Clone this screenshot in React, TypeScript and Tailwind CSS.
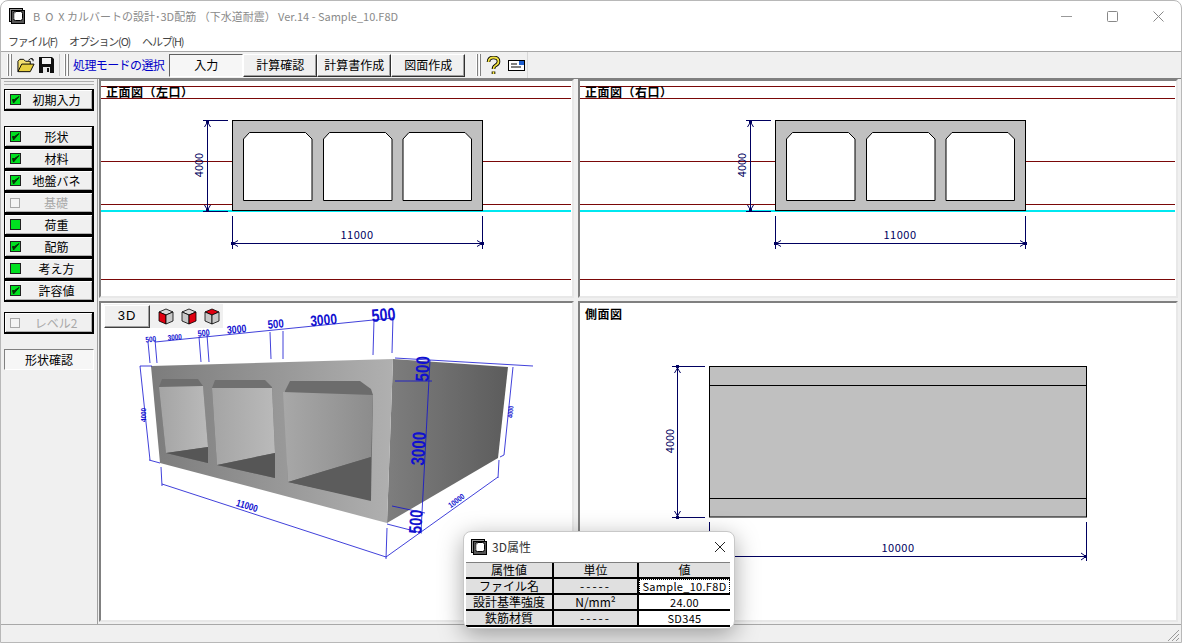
import * as React from "react";

const NAVY = "#000060";
const MAROON = "#7a0808";
const BLUE = "#1010d0";

// window icon, nested squares
const AppIcon = () => (
  <svg width="16" height="16" viewBox="0 0 16 16" className="block shrink-0">
    <rect x="0.5" y="0.5" width="13" height="13" fill="#9a9a9a" stroke="#000" />
    <rect x="2.5" y="2.5" width="13" height="13" fill="#555" stroke="#000" />
    <rect x="4.5" y="3.5" width="9" height="9" rx="2" fill="#fff" stroke="#000" />
    <path d="M5 11 L5 6 Q5 4.500 7 4.500" stroke="#888" fill="none" />
  </svg>
);

const Grip = () => (
  <div className="flex gap-px h-[22px] shrink-0">
    <div className="w-[2px] border-l border-r border-l-white border-r-[#808080]" />
    <div className="w-[2px] border-l border-r border-l-white border-r-[#808080]" />
  </div>
);

const ToolButton = ({ label, pressed }: { label: string; pressed?: boolean }) => (
  <div
    className={
      pressed
        ? "w-[74px] h-[23px] flex items-center justify-center text-xs text-black bg-[#f6f6f6] border border-t-[#606060] border-l-[#606060] border-r-white border-b-white"
        : "w-[74px] h-[23px] flex items-center justify-center text-xs text-black bg-[#f0f0f0] border border-t-white border-l-white border-r-[#303030] border-b-[#303030] shadow-[inset_-1px_-1px_0_#a0a0a0]"
    }
  >
    {label}
  </div>
);

type Side = { label: string; state: "on" | "green" | "off" };

const Check = ({ state }: { state: Side["state"] }) => {
  if (state === "off") {
    return <div className="w-[10px] h-[10px] border border-[#a8a8a8] bg-[#f4f4f4] shrink-0" />;
  }
  return (
    <svg width="11" height="11" viewBox="0 0 11 11" className="block shrink-0">
      <rect x="0.500" y="0.500" width="10" height="10" fill="#00e020" stroke="#202020" />
      {state === "on" && <path d="M2.500 5.500 L3.500 9 L9 2.500 L4.500 5.500 Z" stroke="#083008" fill="#083008" />}
    </svg>
  );
};

const SideButton = ({ label, state }: Side) => (
  <div className="relative flex items-center w-[90px] h-[22px] pl-[5px] bg-[#f0f0f0] border border-black border-r-2 border-b-2 shadow-[inset_1px_1px_0_#fff,inset_-1px_-1px_0_#b0b0b0]">
    <Check state={state} />
    <span className={state === "off" ? "flex-1 text-center text-xs text-[#a8a8a8]" : "flex-1 text-center text-xs text-black"}>
      {label}
    </span>
  </div>
);

const Panel = ({ title, children }: { title?: string; children: React.ReactNode }) => (
  <div className="relative overflow-hidden bg-white border-2 border-t-[#808080] border-l-[#808080] border-r-[#e8e8e8] border-b-[#e8e8e8]">
    {children}
    {title && <span className="absolute left-[5px] top-[3px] text-xs font-bold text-black tracking-[0.5px]">{title}</span>}
  </div>
);

const Opening = ({ x }: { x: number }) => (
  <path
    d={`M${x} 200.500 V139 L${x + 6} 132.500 H${x + 62} L${x + 68.500} 139 V200.500 Z`}
    fill="#fff"
    stroke="#000"
  />
);

// front view: ground lines, box section and dimensions
const FrontView = ({ w, origin, boxX }: { w: number; origin: number; boxX: number }) => {
  const sx = boxX - 232;
  return (
    <svg width={w} height={215} viewBox={`${origin} 81 ${w} 215`} className="block">
      {[86.500, 98.500, 161.500, 204.500, 279.500].map((y) => (
        <line key={y} x1={origin} x2={origin + w - 1} y1={y} y2={y} stroke={MAROON} />
      ))}
      <line x1={origin} x2={origin + w - 1} y1={211} y2={211} stroke="#00e8f0" strokeWidth="2" />
      <g transform={`translate(${sx} 0)`}>
        <rect x="232.500" y="120.500" width="250" height="90" fill="#c0c0c0" stroke="#000" />
        <Opening x={243.500} />
        <Opening x={323.500} />
        <Opening x={403} />
        <g stroke={NAVY} fill="none">
          <path d="M203 120.500 H228 M203 211.500 H228 M207.500 121 V211" />
          <path d="M204.500 127 L207.500 122 L210.500 127 M204.500 205 L207.500 210 L210.500 205" />
          <path d="M232.500 216 V249 M482.500 216 V249 M233 243.500 H482" />
          <path d="M238 240.500 L233 243.500 L238 246.500 M477 240.500 L482 243.500 L477 246.500" />
        </g>
        <rect x="206" y="120" width="3" height="3" fill={NAVY} />
        <rect x="206" y="209" width="3" height="3" fill={NAVY} />
        <rect x="231" y="242" width="3" height="3" fill={NAVY} />
        <rect x="481" y="242" width="3" height="3" fill={NAVY} />
        <text x="357" y="239" fontSize="11" textAnchor="middle" fill={NAVY} letterSpacing="0.5">11000</text>
        <text transform="translate(203 165) rotate(-90)" fontSize="11" textAnchor="middle" fill={NAVY}>4000</text>
      </g>
    </svg>
  );
};

const Dim = ({ x, y, r, s, t }: { x: number; y: number; r: number; s: number; t: string }) => (
  <text
    transform={`translate(${x} ${y}) rotate(${r}) scale(0.8 1)`}
    fontSize={s}
    fontFamily="'Liberation Sans', sans-serif"
    fontWeight="700"
    textAnchor="middle"
    fill={BLUE}
  >
    {t}
  </text>
);

const View3D = () => (
  <svg width="471" height="317" viewBox="101 303 471 317" className="block">
    <defs>
      <linearGradient id="front" x1="0" y1="0" x2="1" y2="0">
        <stop offset="0" stopColor="#7c7c7c" />
        <stop offset="0.5" stopColor="#969696" />
        <stop offset="1" stopColor="#b0b0b0" />
      </linearGradient>
      <linearGradient id="side" x1="0" y1="0" x2="1" y2="0">
        <stop offset="0" stopColor="#7e7e7e" />
        <stop offset="1" stopColor="#5c5c5c" />
      </linearGradient>
      <linearGradient id="wallA" x1="0" y1="0" x2="1" y2="0">
        <stop offset="0" stopColor="#a4a4a4" />
        <stop offset="1" stopColor="#bababa" />
      </linearGradient>
      <linearGradient id="wallB" x1="0" y1="0" x2="1" y2="0">
        <stop offset="0" stopColor="#a8a8a8" />
        <stop offset="1" stopColor="#8c8c8c" />
      </linearGradient>
    </defs>
    <polygon points="393,359 508,367 498,458 387,523" fill="url(#side)" />
    <polygon points="151,366 393,359 387,523 160,463" fill="url(#front)" />

    <polygon points="159,387 162,379 198,379 203,386 208,447 208,463 166,453" fill="#6e6e6e" />
    <polygon points="159,387 203,386 208,447 166,453" fill="url(#wallA)" />
    <polygon points="166,453 208,447 208,463" fill="#565656" />

    <polygon points="212,388 215,380 265,380 272,387 275,453 275,478 217,465" fill="#707070" />
    <polygon points="212,388 272,388 275,453 217,465" fill="url(#wallA)" />
    <polygon points="217,465 275,453 275,478" fill="#565656" />

    <polygon points="285,391 290,381 360,381 371,389 373,395 371,500 288,482" fill="#6c6c6c" />
    <polygon points="283,392 373,395 371,457 288,482" fill="url(#wallB)" />
    <polygon points="288,482 371,457 371,501" fill="#5c5c5c" />

    <g stroke={BLUE} strokeWidth="0.8" fill="none">
      <path d="M155 342 L393 318" />
      <path d="M148 342 L150 363 M155 340 L157 363 M199 337 L201 362 M207 335 L209 362 M270 332 L271 359 M283 331 L283 359 M374 320 L373 355 M393 317 L392 353" />
      <path d="M140 366 L150 460 M140 366 L152 366 M149 460 L160 463" />
      <path d="M162 484 L386 557 M161 467 L162 486 M387 528 L386 559" />
      <path d="M386 557 L498 477 M499 460 L498 478" />
      <path d="M430 360 L421 532 M395 358 L533 366 M395 381 L432 381 M392 506 L425 513 M387 524 L422 533" />
      <path d="M513 367 L504 455 L500 457" />
    </g>
    <Dim x={151} y={342} r={-6} s={8} t="500" />
    <Dim x={175} y={340} r={-6} s={8} t="3000" />
    <Dim x={204} y={336} r={-6} s={9} t="500" />
    <Dim x={237} y={333} r={-5} s={11} t="3000" />
    <Dim x={276} y={328} r={-5} s={12} t="500" />
    <Dim x={324} y={325} r={-5} s={15} t="3000" />
    <Dim x={384} y={321} r={-5} s={18} t="500" />
    <Dim x={146} y={415} r={-90} s={8} t="4000" />
    <Dim x={246} y={509} r={17} s={10} t="11000" />
    <Dim x={458} y={503} r={-36} s={8} t="10000" />
    <Dim x={513} y={412} r={-86} s={7} t="4000" />
    <Dim x={429} y={369} r={-88} s={19} t="500" />
    <Dim x={425} y={449} r={-87} s={19} t="3000" />
    <Dim x={422} y={522} r={-87} s={18} t="500" />
  </svg>
);

const Cube = ({ red }: { red: "left" | "right" | "top" }) => (
  <svg width="16" height="17" viewBox="0 0 16 17" className="block">
    <g stroke="#000" strokeWidth="0.800">
      <polygon points="8,1 15,4 8,7 1,4" fill={red === "top" ? "#e00010" : "#d8d8d8"} />
      <polygon points="1,4 8,7 8,16 1,13" fill={red === "left" ? "#e00010" : "#c8c8c8"} />
      <polygon points="15,4 8,7 8,16 15,13" fill={red === "right" ? "#e00010" : "#c8c8c8"} />
    </g>
  </svg>
);

const SideView = () => (
  <svg width="596" height="317" viewBox="580 303 596 317" className="block">
    <rect x="709.500" y="366.500" width="377" height="150.500" fill="#c0c0c0" stroke="#000" />
    <path d="M709.500 385.500 H1086.500 M709.500 498.500 H1086.500" stroke="#000" />
    <g stroke={NAVY} fill="none">
      <path d="M672 366.500 H705 M672 517.500 H705 M677.500 367 V517" />
      <path d="M674.500 373 L677.500 368 L680.500 373 M674.500 511 L677.500 516 L680.500 511" />
      <path d="M709.500 522 V561 M1086.500 522 V561 M710 556.500 H1086" />
      <path d="M1081 553 L1086 556.500 L1081 560 M715 553 L710 556.500 L715 560" />
    </g>
    <rect x="1084" y="555" width="3" height="3" fill={NAVY} />
    <rect x="676" y="365" width="3" height="3" fill={NAVY} />
    <rect x="676" y="516" width="3" height="3" fill={NAVY} />
    <text x="898" y="552" fontSize="11" textAnchor="middle" fill={NAVY} letterSpacing="0.5">10000</text>
    <text transform="translate(674 441) rotate(-90)" fontSize="11" textAnchor="middle" fill={NAVY}>4000</text>
  </svg>
);

const rows = [
  ["属性値", "単位", "値"],
  ["ファイル名", "-----", "Sample_10.F8D"],
  ["設計基準強度", "N/mm²", "24.00"],
  ["鉄筋材質", "-----", "SD345"],
];

const Dialog = () => (
  <div className="absolute left-[462px] top-[530px] w-[272px] h-[98px] bg-white rounded-lg border border-[#c8c8c8] shadow-[0_6px_24px_rgba(0,0,0,0.35)] overflow-hidden">
    <div className="flex items-center h-[30px] pl-[7px] pr-2 gap-[5px]">
      <AppIcon />
      <span className="text-xs text-[#333]">3D属性</span>
      <svg width="12" height="12" viewBox="0 0 12 12" className="block ml-auto">
        <path d="M1 1 L11 11 M11 1 L1 11" stroke="#222" strokeWidth="1" />
      </svg>
    </div>
    <div className="ml-[2px] w-[264px] border-t border-[#808080] grid grid-cols-[88px_85px_91px] grid-rows-[16px_16px_16px_16px]">
      {rows.map((r, i) =>
        r.map((c, j) => (
          <div
            key={i + "-" + j}
            className={
              "flex items-center justify-center text-xs leading-none border-b-2 border-black whitespace-nowrap " +
              (c === "-----" ? "tracking-[2px] " : "") +
              (j < 2 ? "border-r-2 " : "") +
              (i === 1 && j === 2 ? "outline outline-1 outline-dotted outline-black -outline-offset-1 " : "") +
              (j === 2 && i > 0 ? "bg-white text-[11px] tracking-[0.3px]" : "bg-[#e0e0e0]")
            }
          >
            {c}
          </div>
        ))
      )}
    </div>
  </div>
);

const group: Side[] = [
  { label: "形状", state: "on" },
  { label: "材料", state: "on" },
  { label: "地盤バネ", state: "on" },
  { label: "基礎", state: "off" },
  { label: "荷重", state: "green" },
  { label: "配筋", state: "on" },
  { label: "考え方", state: "green" },
  { label: "許容値", state: "on" },
];

export default function App() {
  return (
    <div className="relative w-[1182px] h-[643px] overflow-hidden flex flex-col bg-white rounded-t-lg border border-[#b8b8b8] font-['Noto_Sans_CJK_JP','Liberation_Sans',sans-serif]">
      {/* title bar */}
      <div className="flex items-center h-[30px] pl-[8px] shrink-0">
        <AppIcon />
        <span className="ml-[8px] text-[11px] text-[#8a8a8a] whitespace-pre">
          {"B  O  X カルバートの設計･3D配筋 （下水道耐震） Ver.14 - Sample_10.F8D"}
        </span>
        <div className="ml-auto flex items-center gap-[35px] pr-[17px]">
          <svg width="11" height="11" viewBox="0 0 11 11" className="block">
            <path d="M0 5.500 H11" stroke="#999" />
          </svg>
          <svg width="11" height="11" viewBox="0 0 11 11" className="block">
            <rect x="0.500" y="0.500" width="10" height="10" rx="1" fill="none" stroke="#888" />
          </svg>
          <svg width="11" height="11" viewBox="0 0 11 11" className="block">
            <path d="M0.500 0.500 L10.500 10.500 M10.500 0.500 L0.500 10.500" stroke="#888" />
          </svg>
        </div>
      </div>

      {/* menu */}
      <div className="flex items-center h-[20px] pl-[7px] gap-[12px] text-[11px] tracking-[-1.200px] text-[#444] shrink-0">
        <span>ファイル(F)</span>
        <span>オプション(O)</span>
        <span>ヘルプ(H)</span>
      </div>

      {/* toolbar */}
      <div className="flex items-center h-[27px] pl-[6px] bg-[#f0f0f0] border-t border-[#a8a8a8] shrink-0">
        <Grip />
        <svg width="18" height="17" viewBox="0 0 19 17" className="block ml-[5px]">
          <path d="M1 15 V4 L3 2 H7 L9 4 H14 V7" fill="#f4e070" stroke="#000" />
          <path d="M1 15 L5 7 H18 L14 15 Z" fill="#e8d040" stroke="#000" />
          <path d="M12 3 Q14 0 17 2 M17 2 L15 1 M17 2 L17 4" stroke="#000" fill="none" />
        </svg>
        <svg width="15" height="16" viewBox="0 0 15 16" className="block ml-[4px]">
          <path d="M0 0 H13 L15 2 V16 H0 Z" fill="#101010" />
          <rect x="3" y="1" width="9" height="6" fill="#f4f4f4" />
          <rect x="4" y="10" width="7" height="6" fill="#e8e8e8" />
          <rect x="8" y="11" width="2" height="4" fill="#101010" />
        </svg>
        <div className="w-px h-[22px] bg-[#c8c8c8] ml-[5px] mr-[4px]" />
        <Grip />
        <span className="ml-[4px] text-xs tracking-[-0.6px] text-[#0000c8] whitespace-nowrap">処理モードの選択</span>
        <div className="flex ml-[5px]">
          <ToolButton label="入力" pressed />
          <ToolButton label="計算確認" />
          <ToolButton label="計算書作成" />
          <ToolButton label="図面作成" />
        </div>
        <div className="ml-[11px]">
          <Grip />
        </div>
        <svg width="15" height="19" viewBox="0 0 15 19" className="block ml-[5px]">
          <path d="M2.500 6 Q2.500 1.500 7.500 1.500 Q12.500 1.500 12.500 5.500 Q12.500 8 9.500 9.500 Q7.500 10.500 7.500 13 M7.500 15.500 V18" fill="none" stroke="#000" strokeWidth="3.600" />
          <path d="M2.500 6 Q2.500 1.500 7.500 1.500 Q12.500 1.500 12.500 5.500 Q12.500 8 9.500 9.500 Q7.500 10.500 7.500 13 M7.500 15.500 V18" fill="none" stroke="#f0e040" strokeWidth="1.800" />
        </svg>
        <svg width="17" height="12" viewBox="0 0 17 12" className="block ml-[7px]">
          <rect x="0.500" y="1.500" width="16" height="10" fill="#fff" stroke="#000" />
          <rect x="11" y="2" width="5" height="4" fill="#2060d0" />
          <path d="M3 5 H9 M3 8 H13" stroke="#000" />
        </svg>
        <div className="w-px h-[27px] bg-[#d8d8d8] ml-[2px]" />
      </div>

      {/* main area */}
      <div className="flex flex-1 min-h-0 bg-[#f0f0f0] border-t border-[#808080]">
        <aside className="w-[97px] shrink-0 flex flex-col pl-[3px] border-r border-[#a0a0a0]">
          <div className="mt-[2px] h-[4px] mr-[3px] border-y border-y-[#b0b0b0]" />
          <div className="mt-[4px]">
            <SideButton label="初期入力" state="on" />
          </div>
          <div className="mt-[15px] flex flex-col">
            {group.map((g) => (
              <SideButton key={g.label} label={g.label} state={g.state} />
            ))}
          </div>
          <div className="mt-[10px]">
            <SideButton label="レベル2" state="off" />
          </div>
          <div className="mt-[15px] w-[90px] h-[21px] flex items-center justify-center text-xs text-black bg-[#f6f6f6] border border-t-[#808080] border-l-[#808080] border-r-white border-b-white">
            形状確認
          </div>
        </aside>
        <div className="flex-1 min-w-0 grid grid-cols-[475px_600px] grid-rows-[219px_321px] gap-x-[4px] gap-y-[3px] pl-[1px]">
          <Panel title="正面図（左口）">
            <FrontView w={471} origin={101} boxX={232} />
          </Panel>
          <Panel title="正面図（右口）">
            <FrontView w={596} origin={580} boxX={775} />
          </Panel>
          <Panel>
            <View3D />
            <div className="absolute left-[3px] top-[1px] flex items-center h-[24px] bg-[#f0f0f0] pr-[3px]">
              <div className="w-[46px] h-[23px] flex items-center justify-center text-[13px] font-medium tracking-[1px] bg-[#f0f0f0] border border-t-white border-l-white border-r-[#404040] border-b-[#404040] shadow-[inset_-1px_-1px_0_#a0a0a0] font-['Liberation_Sans',sans-serif]">
                3D
              </div>
              <div className="flex gap-[7px] ml-[8px]">
                <Cube red="left" />
                <Cube red="right" />
                <Cube red="top" />
              </div>
            </div>
          </Panel>
          <Panel title="側面図">
            <SideView />
          </Panel>
        </div>
      </div>

      {/* status bar */}
      <div className="relative h-[18px] shrink-0 bg-[#f0f0f0] border-t border-[#a8a8a8]">
        <svg width="14" height="14" viewBox="0 0 14 14" className="absolute right-[1px] bottom-0 block">
          <path d="M13 2 L2 13 M13 6 L6 13 M13 10 L10 13" stroke="#999" />
        </svg>
      </div>

      <Dialog />
    </div>
  );
}
